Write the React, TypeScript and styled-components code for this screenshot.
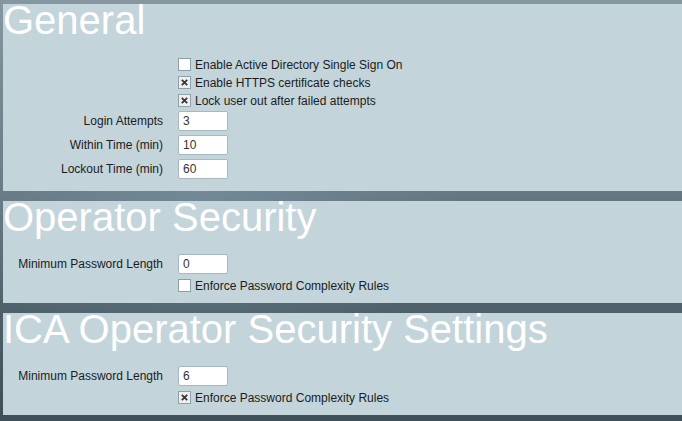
import React from "react";
import styled, { createGlobalStyle } from "styled-components";

const GlobalStyle = createGlobalStyle`
  html, body {
    margin: 0;
    padding: 0;
    height: 100%;
    overflow: hidden;
  }
  body {
    font-family: "Liberation Sans", Arial, sans-serif;
    background:
      radial-gradient(ellipse 260px 160px at 200px 200px, rgba(140, 170, 190, 0.35), rgba(140,170,190,0) 100%),
      linear-gradient(to bottom, #8597a0 0%, #667883 45%, #4d606a 75%, #3f4f58 100%);
  }
`;

const Page = styled.div`
  display: flex;
  flex-direction: column;
  gap: 10px;
  padding: 4px 0 0 3px;
  width: 682px;
  height: 421px;
  box-sizing: border-box;
`;

const Panel = styled.section<{ $bottom?: number }>`
  display: flow-root;
  background: #c3d4da;
  padding-bottom: ${(p) => p.$bottom ?? 8}px;
`;

const Heading = styled.h1`
  margin: -7px 0 -7px 0;
  font-family: "Liberation Sans", Arial, sans-serif;
  font-weight: normal;
  font-size: 40px;
  line-height: 46px;
  color: #ffffff;
  white-space: nowrap;
`;

const Form = styled.div`
  padding-top: 20px;
  display: flex;
  flex-direction: column;
`;

const Row = styled.div<{ $h: number }>`
  display: grid;
  grid-template-columns: 160px 1fr;
  column-gap: 15px;
  height: ${(p) => p.$h}px;
  align-items: start;
`;

const Label = styled.label`
  text-align: right;
  font-size: 12px;
  color: #1c1c1c;
  line-height: 20px;
  margin-top: 1px;
  white-space: nowrap;
`;

const TextBox = styled.div`
  margin-top: 1px;
  width: 50px;
  height: 20px;
  box-sizing: border-box;
  background: #ffffff;
  border: 1px solid #a6b8c0;
  border-radius: 2px;
  font-size: 12px;
  line-height: 18px;
  padding-left: 4px;
  color: #333333;
`;

const CheckWrap = styled.div`
  display: flex;
  align-items: center;
  gap: 4px;
  margin-top: 2px;
  height: 13px;
`;

const Box = styled.span<{ $checked: boolean }>`
  width: 13px;
  height: 13px;
  box-sizing: border-box;
  border: 1px solid ${(p) => (p.$checked ? "#8fa2ab" : "#8d9fa8")};
  background: ${(p) => (p.$checked ? "#eeeeee" : "#ffffff")};
  display: flex;
  align-items: center;
  justify-content: center;
`;

const CheckText = styled.span`
  font-size: 12px;
  color: #1c1c1c;
  white-space: nowrap;
`;

const Check = ({ checked, text }: { checked: boolean; text: string }) => (
  <Row $h={18}>
    <span />
    <CheckWrap>
      <Box $checked={checked}>
        {checked && (
          <svg width="7" height="7" viewBox="0 0 7 7">
            <path d="M0.8 0.8 L6.2 6.2 M6.2 0.8 L0.8 6.2" stroke="#333" strokeWidth="1.7" />
          </svg>
        )}
      </Box>
      <CheckText>{text}</CheckText>
    </CheckWrap>
  </Row>
);

const Field = ({ label, value }: { label: string; value: string }) => (
  <Row $h={24}>
    <Label>{label}</Label>
    <TextBox>{value}</TextBox>
  </Row>
);

export default function App() {
  return (
    <>
      <GlobalStyle />
      <Page>
        <Panel $bottom={9}>
          <Heading>General</Heading>
          <Form>
            <Check checked={false} text="Enable Active Directory Single Sign On" />
            <Check checked text="Enable HTTPS certificate checks" />
            <Check checked text="Lock user out after failed attempts" />
            <Field label="Login Attempts" value="3" />
            <Field label="Within Time (min)" value="10" />
            <Field label="Lockout Time (min)" value="60" />
          </Form>
        </Panel>
        <Panel>
          <Heading>Operator Security</Heading>
          <Form>
            <Field label="Minimum Password Length" value="0" />
            <Check checked={false} text="Enforce Password Complexity Rules" />
          </Form>
        </Panel>
        <Panel>
          <Heading>ICA Operator Security Settings</Heading>
          <Form>
            <Field label="Minimum Password Length" value="6" />
            <Check checked text="Enforce Password Complexity Rules" />
          </Form>
        </Panel>
      </Page>
    </>
  );
}
